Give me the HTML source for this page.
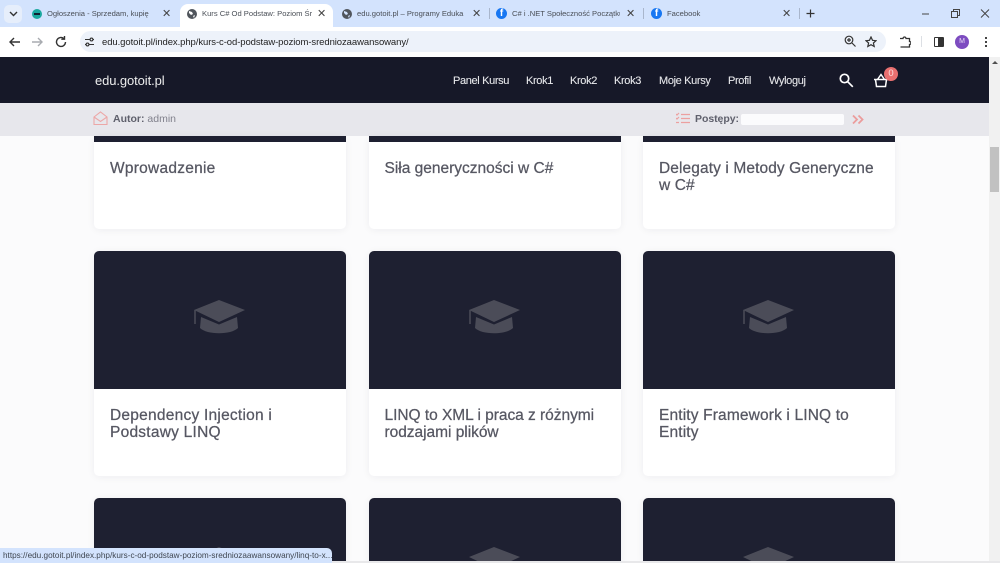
<!DOCTYPE html>
<html><head><meta charset="utf-8"><style>
html,body{margin:0;padding:0;width:1000px;height:563px;overflow:hidden;background:#fbfbfc;font-family:"Liberation Sans",sans-serif}
.a{position:absolute;white-space:nowrap}
.tab{font-size:7.6px;color:#4a4f57;top:9px;line-height:10px}
.x{font-size:11px;color:#444;top:8px;line-height:12px}
.nav{font-size:11px;color:#e6e7ea;top:74.500px;line-height:13px;letter-spacing:-.35px;-webkit-text-stroke:.1px #e6e7ea}
.card{position:absolute;width:252px;background:#fff;border-radius:5px;box-shadow:0 1px 8px rgba(30,30,50,.06)}
.img{position:absolute;left:0;width:100%;background:#1e2031}
.t{position:absolute;left:16px;font-size:15.5px;line-height:17px;color:#565762;white-space:nowrap;-webkit-text-stroke:.25px #565762}
.cap{position:absolute;left:99px;width:54px;height:36px}
</style></head><body>
<div class="a" style="left:0;top:0;width:1000px;height:27px;background:#d3e3fd"></div>
<div class="a" style="left:180px;top:4px;width:153px;height:23px;background:#fff;border-radius:8px 8px 0 0"></div>
<div class="a" style="left:4px;top:5px;width:18px;height:18px;background:#e6eefb;border-radius:5px"></div>
<svg class="a" style="left:9px;top:11px" width="9" height="6"><path d="M1 1l3.500 3.500L8 1" fill="none" stroke="#333" stroke-width="1.400"/></svg>
<div class="a" style="left:32px;top:9px;width:10px;height:10px;border-radius:50%;background:#1aa89f"></div>
<div class="a" style="left:34px;top:13px;width:6px;height:2px;background:#123"></div>
<div class="a tab" style="left:47px;width:106px;overflow:hidden">Ogłoszenia - Sprzedam, kupię</div><div class="a x" style="left:162px">✕</div>
<svg class="a" style="left:187px;top:9px" width="10" height="10" viewBox="0 0 10 10"><circle cx="5" cy="5" r="5" fill="#50555c"/><path d="M2 2l3 1 1 2-2 1-2-2zM6 7l2-1-1 3z" fill="#fff"/></svg>
<div class="a tab" style="left:202px;width:110px;overflow:hidden">Kurs C# Od Podstaw: Poziom Śr</div><div class="a x" style="left:317px">✕</div>
<svg class="a" style="left:342px;top:9px" width="10" height="10" viewBox="0 0 10 10"><circle cx="5" cy="5" r="5" fill="#50555c"/><path d="M2 2l3 1 1 2-2 1-2-2zM6 7l2-1-1 3z" fill="#d3e3fd"/></svg>
<div class="a tab" style="left:357px;width:108px;overflow:hidden">edu.gotoit.pl – Programy Eduka</div><div class="a x" style="left:472px">✕</div>
<div class="a" style="left:489px;top:8px;width:1px;height:11px;background:#a9b6cc"></div>
<div class="a" style="left:496px;top:8px;width:11px;height:11px;border-radius:50%;background:#1877f2;color:#fff;font-size:10px;font-weight:bold;line-height:12px;text-align:center">f</div>
<div class="a tab" style="left:512px;width:108px;overflow:hidden">C# i .NET Społeczność Początku</div><div class="a x" style="left:626px">✕</div>
<div class="a" style="left:643px;top:8px;width:1px;height:11px;background:#a9b6cc"></div>
<div class="a" style="left:651px;top:8px;width:11px;height:11px;border-radius:50%;background:#1877f2;color:#fff;font-size:10px;font-weight:bold;line-height:12px;text-align:center">f</div>
<div class="a tab" style="left:667px">Facebook</div><div class="a x" style="left:782px">✕</div>
<div class="a" style="left:799px;top:8px;width:1px;height:11px;background:#a9b6cc"></div>
<svg class="a" style="left:805px;top:8px" width="11" height="11"><path d="M5.500 1.500v8M1.500 5.500h8" stroke="#333" stroke-width="1.200"/></svg>
<svg class="a" style="left:920px;top:8px" width="70" height="11" fill="none" stroke="#444"><path d="M2 6h7" stroke-width="1"/><rect x="31.500" y="3.500" width="6" height="6"/><path d="M33.500 3.500v-2h6v6h-2"/><path d="M61 1.500l8 8M69 1.500l-8 8"/></svg>
<div class="a" style="left:0;top:27px;width:1000px;height:30px;background:#fff"></div>
<div class="a" style="left:80px;top:31px;width:806px;height:21px;background:#edf2fa;border-radius:11px"></div>
<svg class="a" style="left:8px;top:35px" width="62" height="14" fill="none" stroke-width="1.400"><path d="M12 7H2M6 3L2 7l4 4" stroke="#333"/><path d="M34 7H24M30 3l4 4-4 4" stroke="#a8abb0"/><path d="M61 7a4.500 4.500 0 1 1-1.500-3.400M60 1v3.200h-3.200" stroke="#333" transform="translate(-3.500 0)"/></svg>
<svg class="a" style="left:84px;top:37px" width="11" height="10" fill="none" stroke="#333" stroke-width="1.100"><path d="M1 2.500h5M9 2.500h1M1 7.500h1M5 7.500h5"/><circle cx="7.500" cy="2.500" r="1.400"/><circle cx="3.500" cy="7.500" r="1.400"/></svg>
<div class="a" style="left:102px;top:35.500px;font-size:9.500px;line-height:13px;color:#222;letter-spacing:-.08px">edu.gotoit.pl/index.php/kurs-c-od-podstaw-poziom-sredniozaawansowany/</div>
<svg class="a" style="left:844px;top:35px" width="12" height="13" fill="none" stroke="#333" stroke-width="1.200"><circle cx="5" cy="5" r="3.800"/><path d="M8 8l3.500 3.500M3 5h4M5 3v4"/></svg>
<svg class="a" style="left:865px;top:36px" width="12" height="12" viewBox="0 0 12 12" fill="none" stroke="#333" stroke-width="1.200"><path d="M6 1l1.500 3.300 3.500.4-2.600 2.300.8 3.500L6 8.700 2.800 10.500l.8-3.500L1 4.700l3.500-.4z"/></svg>
<svg class="a" style="left:899px;top:35px" width="12" height="13" fill="none" stroke="#333" stroke-width="1.300"><path d="M1 3.500h3a1.500 1.500 0 0 1 3 0h3.500v3a1.500 1.500 0 0 1 0 3v2.500H1.500"/></svg>
<div class="a" style="left:921px;top:36px;width:1px;height:11px;background:#dcdfe4"></div>
<div class="a" style="left:934px;top:37px;width:8px;height:8px;border:1px solid #333;border-radius:1px"></div>
<div class="a" style="left:938px;top:37px;width:5px;height:10px;background:#333"></div>
<div class="a" style="left:955px;top:35px;width:14px;height:14px;border-radius:50%;background:#7d4cc0;color:#e8dcf6;font-size:7px;line-height:14px;text-align:center">M</div>
<div class="a" style="left:985px;top:37px;width:2px;height:2px;background:#444;box-shadow:0 4px #444,0 8px #444"></div>

<div class="a" style="left:0;top:57px;width:989px;height:46px;background:#161828"></div>
<div class="a" style="left:95px;top:73px;font-size:13px;line-height:16px;color:#eceded;letter-spacing:-.1px">edu.gotoit.pl</div>
<div class="a nav" style="left:453px">Panel Kursu</div>
<div class="a nav" style="left:526px">Krok1</div>
<div class="a nav" style="left:570px">Krok2</div>
<div class="a nav" style="left:614px">Krok3</div>
<div class="a nav" style="left:659px">Moje Kursy</div>
<div class="a nav" style="left:728px">Profil</div>
<div class="a nav" style="left:769px">Wyloguj</div>
<svg class="a" style="left:839px;top:73px" width="15" height="15" fill="none" stroke="#fff"><circle cx="5.500" cy="5.500" r="4.200" stroke-width="1.700"/><path d="M8.800 8.800l5 5" stroke-width="1.700"/></svg>
<svg class="a" style="left:873px;top:73px" width="16" height="15" fill="none" stroke="#fff" stroke-width="1.500"><path d="M1 6.500h14M2.500 6.500l1 7h9l1-7M4.500 6.500L8 1.500l3.500 5"/></svg>
<div class="a" style="left:884px;top:67px;width:14px;height:14px;border-radius:50%;background:#e97070;color:#fbdcdc;font-size:9.500px;line-height:14px;text-align:center">0</div>

<div class="a" style="left:0;top:103px;width:989px;height:33px;background:#e7e7ec"></div>
<svg class="a" style="left:93px;top:111px" width="15" height="15" fill="none" stroke="#eca7a7" stroke-width="1.100"><path d="M1 6l6.500-5L14 6v7.500H1z"/><path d="M1 6l6.500 4.500L14 6"/></svg>
<div class="a" style="left:113px;top:113px;font-size:10.500px;line-height:13px;color:#81818c"><b style="color:#5f606c">Autor:</b> admin</div>
<svg class="a" style="left:676px;top:112px" width="14" height="14" fill="none" stroke="#eca0a0" stroke-width="1.200"><path d="M5 2.500h9M5 6.500h9M5 10.500h9M0 2l1 1 2-2M0 6l1 1 2-2M0 10.500h3"/></svg>
<div class="a" style="left:695px;top:113px;font-size:10.500px;font-weight:bold;line-height:13px;color:#5f606c;letter-spacing:-.05px">Postępy:</div>
<div class="a" style="left:741px;top:114px;width:103px;height:11px;background:#fbfbfd;border-radius:2px"></div>
<svg class="a" style="left:852px;top:114px" width="12" height="11" fill="none" stroke="#eb9c9c" stroke-width="1.800"><path d="M1 1.500l4 4-4 4M6.500 1.500l4 4-4 4"/></svg>

<div class="a" style="left:989px;top:57px;width:11px;height:506px;background:#f1f1f1"></div>
<div class="a" style="left:990px;top:147px;width:9px;height:45px;background:#c1c1c1"></div>
<div class="a" style="left:992px;top:61px;border:3px solid transparent;border-bottom:3px solid #505050;border-top:0"></div>

<div class="card" style="left:94px;top:136px;height:93px"><div class="img" style="top:0;height:6px"></div><div class="t" style="top:24px;letter-spacing:.25px">Wprowadzenie</div></div>
<div class="card" style="left:368.500px;top:136px;height:93px"><div class="img" style="top:0;height:6px"></div><div class="t" style="top:24px;letter-spacing:0">Siła generyczności w C#</div></div>
<div class="card" style="left:643px;top:136px;height:93px"><div class="img" style="top:0;height:6px"></div><div class="t" style="top:24px;letter-spacing:.1px">Delegaty i Metody Generyczne<br>w C#</div></div>

<div class="card" style="left:94px;top:251px;height:225px"><div class="img" style="top:0;height:138px;border-radius:5px 5px 0 0"></div>
<svg class="cap" style="top:49px" viewBox="0 0 54 36"><path d="M26 0L52 10 26 22 1 10z" fill="#4b4c58"/><path d="M8 17L26 24.500 44 17 45 28C38 35 14 35 7 28z" fill="#4b4c58"/><path d="M2 10v14" stroke="#4b4c58" stroke-width="1.500"/></svg>
<div class="t" style="top:156px;letter-spacing:.24px">Dependency Injection i<br>Podstawy LINQ</div></div>
<div class="card" style="left:368.500px;top:251px;height:225px"><div class="img" style="top:0;height:138px;border-radius:5px 5px 0 0"></div>
<svg class="cap" style="top:49px" viewBox="0 0 54 36"><path d="M26 0L52 10 26 22 1 10z" fill="#4b4c58"/><path d="M8 17L26 24.500 44 17 45 28C38 35 14 35 7 28z" fill="#4b4c58"/><path d="M2 10v14" stroke="#4b4c58" stroke-width="1.500"/></svg>
<div class="t" style="top:156px;letter-spacing:-.03px">LINQ to XML i praca z różnymi<br>rodzajami plików</div></div>
<div class="card" style="left:643px;top:251px;height:225px"><div class="img" style="top:0;height:138px;border-radius:5px 5px 0 0"></div>
<svg class="cap" style="top:49px" viewBox="0 0 54 36"><path d="M26 0L52 10 26 22 1 10z" fill="#4b4c58"/><path d="M8 17L26 24.500 44 17 45 28C38 35 14 35 7 28z" fill="#4b4c58"/><path d="M2 10v14" stroke="#4b4c58" stroke-width="1.500"/></svg>
<div class="t" style="top:156px;letter-spacing:.15px">Entity Framework i LINQ to<br>Entity</div></div>

<div class="card" style="left:94px;top:498px;height:65px;overflow:hidden;border-radius:5px 5px 0 0"><div class="img" style="top:0;height:65px"></div><svg class="cap" style="top:49px" viewBox="0 0 54 36"><path d="M26 0L52 10 26 22 1 10z" fill="#4b4c58"/></svg></div>
<div class="card" style="left:368.500px;top:498px;height:65px;overflow:hidden;border-radius:5px 5px 0 0"><div class="img" style="top:0;height:65px"></div><svg class="cap" style="top:49px" viewBox="0 0 54 36"><path d="M26 0L52 10 26 22 1 10z" fill="#4b4c58"/></svg></div>
<div class="card" style="left:643px;top:498px;height:65px;overflow:hidden;border-radius:5px 5px 0 0"><div class="img" style="top:0;height:65px"></div><svg class="cap" style="top:49px" viewBox="0 0 54 36"><path d="M26 0L52 10 26 22 1 10z" fill="#4b4c58"/></svg></div>

<div class="a" style="left:0;top:561px;width:1000px;height:2px;background:#e8e8ea;z-index:4"></div>
<div class="a" style="left:0;top:548px;width:332px;height:15px;background:#d3e3fd;border-radius:0 5px 0 0;z-index:5"></div>
<div class="a" style="left:3px;top:550px;font-size:8.200px;line-height:11px;color:#3f4650;z-index:6">https://edu.gotoit.pl/index.php/kurs-c-od-podstaw-poziom-sredniozaawansowany/linq-to-x...</div>
</body></html>
